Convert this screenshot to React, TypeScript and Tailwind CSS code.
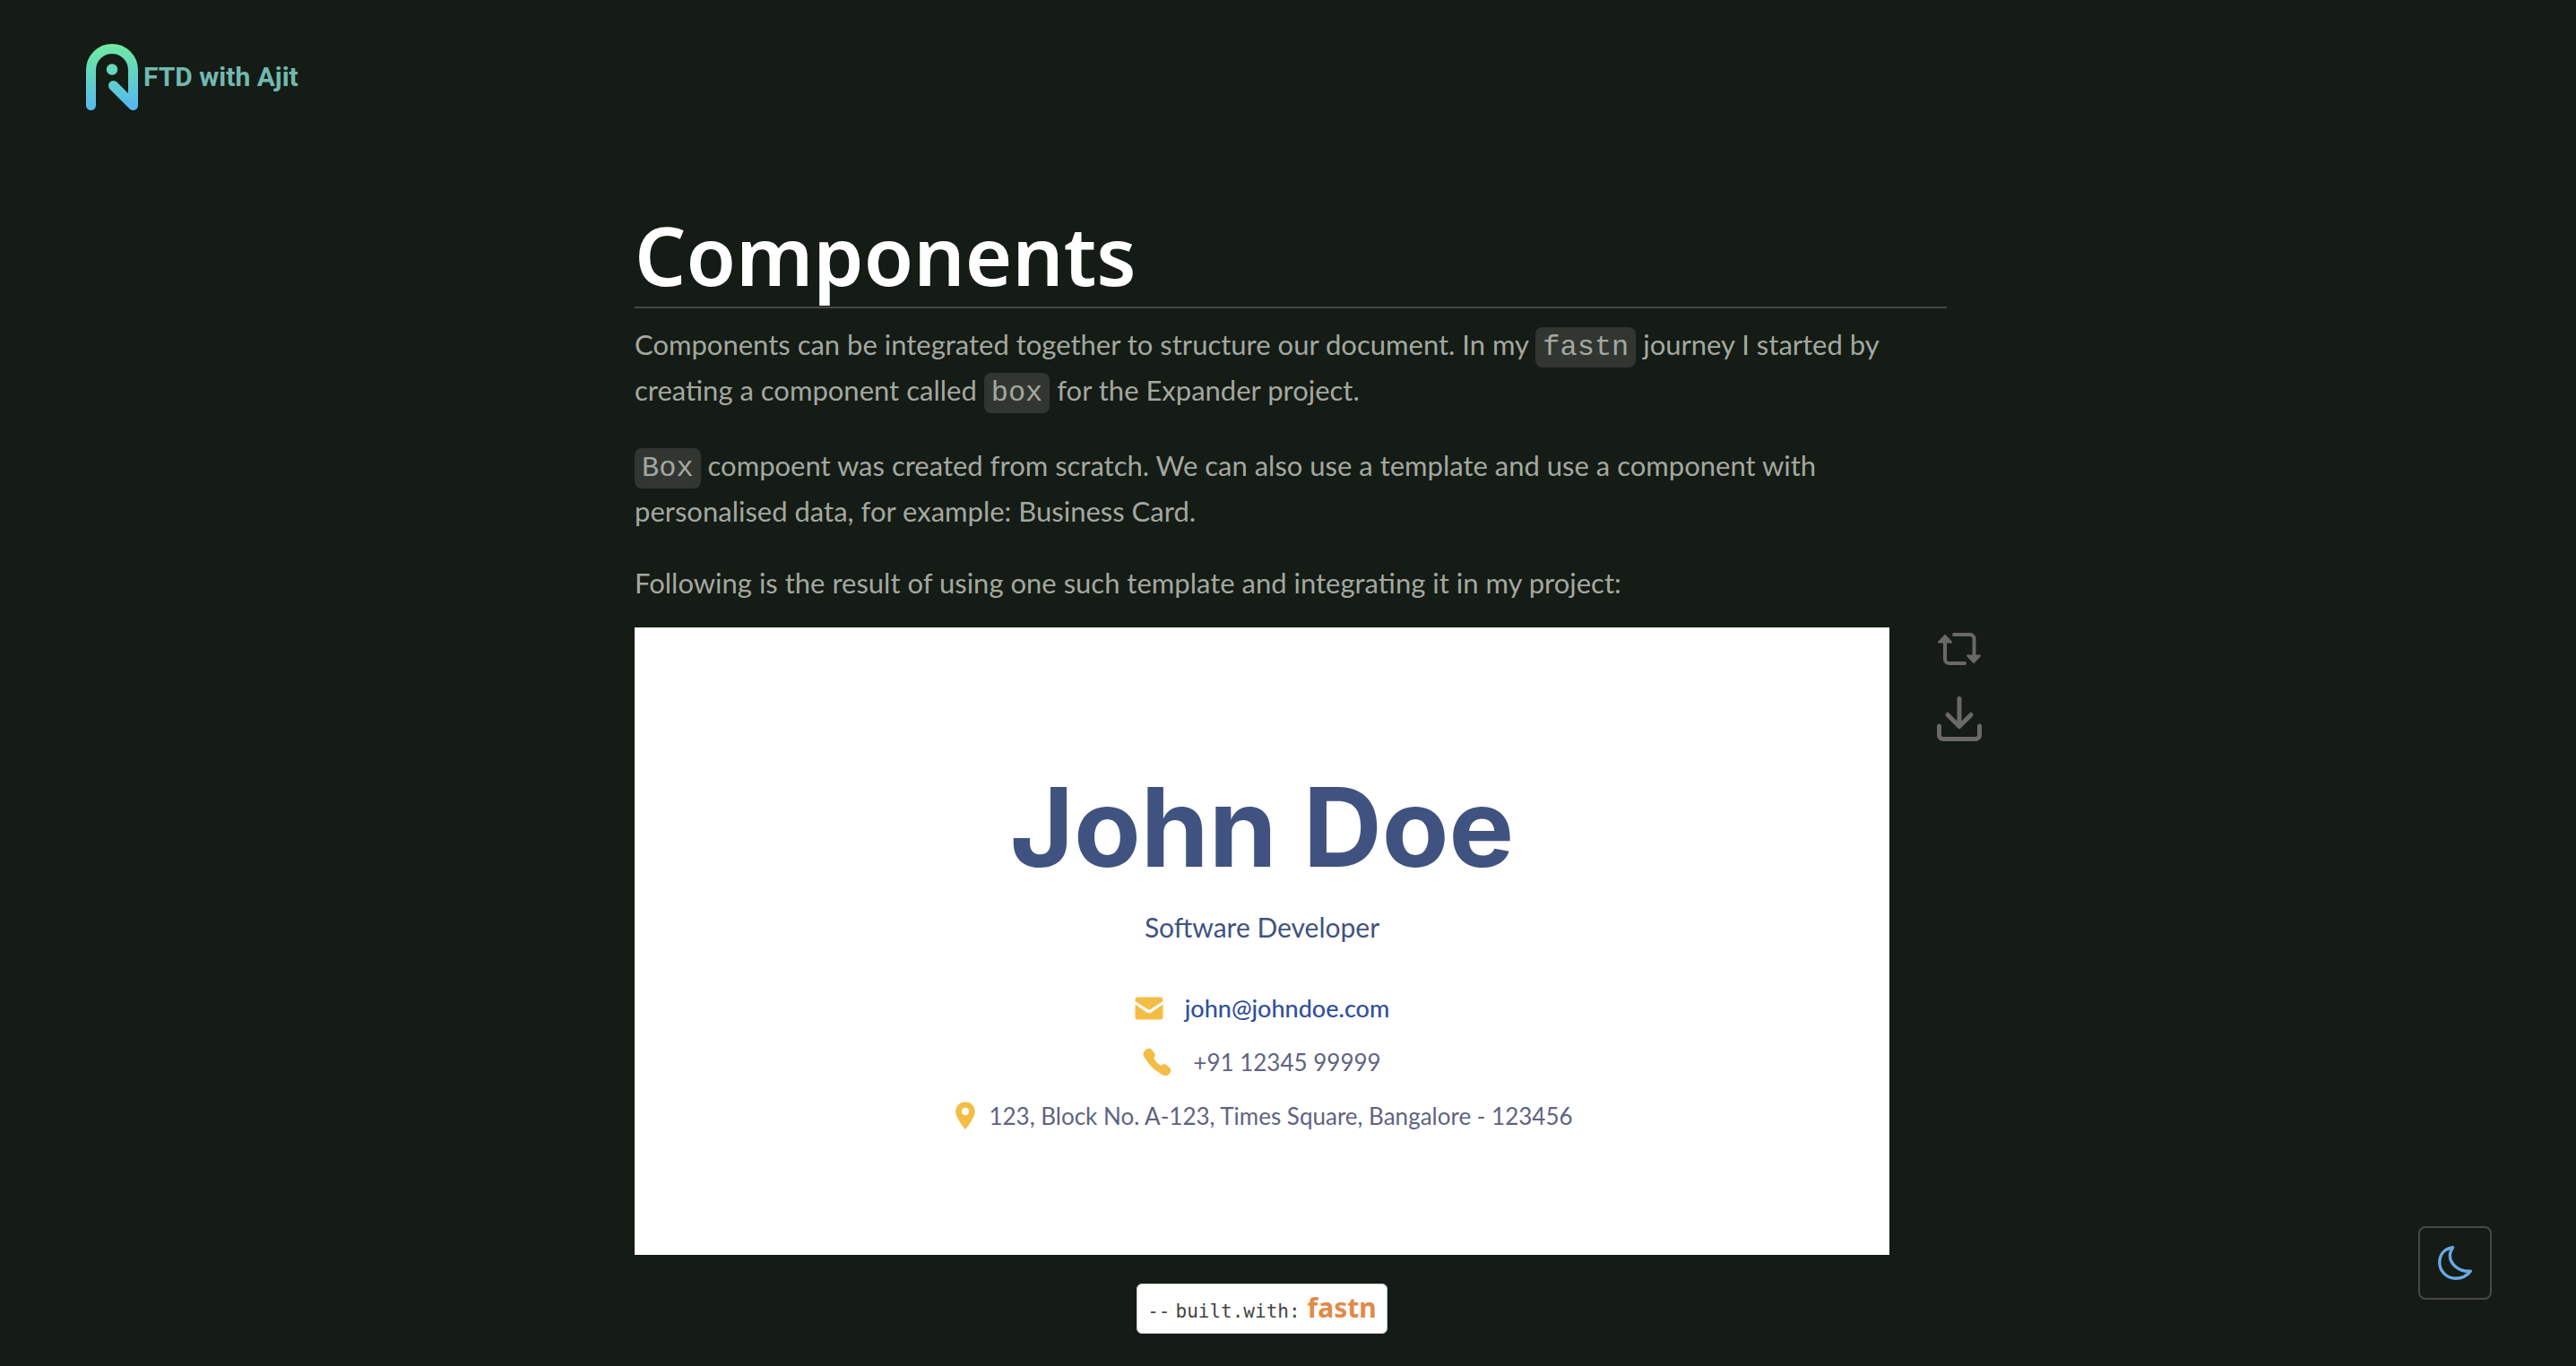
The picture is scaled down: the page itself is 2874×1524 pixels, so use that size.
import type { ReactNode } from "react";

function Code({ children }: { children: ReactNode }) {
  return (
    <code className="rounded-lg bg-[#313630] px-2 py-1 font-['Liberation_Mono',monospace] text-[32px] leading-none">
      {children}
    </code>
  );
}

function Logo() {
  return (
    <a href="#" className="flex items-center gap-[6px]">
      <svg viewBox="0 0 58 74" className="h-[74px] w-[58px]" aria-hidden="true">
        <defs>
          <linearGradient id="logo" gradientUnits="userSpaceOnUse" x1="24" y1="0" x2="32" y2="74">
            <stop offset="0" stopColor="#70eba0" />
            <stop offset="0.5" stopColor="#62d2c6" />
            <stop offset="1" stopColor="#55b8f3" />
          </linearGradient>
        </defs>
        <path
          d="M5.5 68.5V29a23.5 23.5 0 0 1 47 0V68.5L30.5 46.5"
          fill="none"
          stroke="url(#logo)"
          strokeWidth="11"
          strokeLinecap="round"
          strokeLinejoin="round"
        />
        <circle cx="29" cy="28.5" r="6.2" fill="url(#logo)" />
      </svg>
      <span className="font-['Roboto',sans-serif] text-[30px] leading-none font-bold text-[#71b9b0]">
        FTD with Ajit
      </span>
    </a>
  );
}

function MailIcon() {
  return (
    <svg viewBox="0 0 32 32" className="size-8" fill="#f5bc45" aria-hidden="true">
      <path d="M3.5 3.500h25a3 3 0 0 1 3 3v1.600L18 16.800a3.400 3.400 0 0 1-4 0L.5 8.100V6.500a3 3 0 0 1 3-3Z" />
      <path d="M.5 11.500 13 20.300a5 5 0 0 0 6 0L31.500 11.500V25.500a3 3 0 0 1-3 3h-25a3 3 0 0 1-3-3Z" />
    </svg>
  );
}

function PhoneIcon() {
  return (
    <svg viewBox="0 0 32 32" className="size-8" fill="#f5bc45" aria-hidden="true">
      <path d="M2.200 3.200C4.500.600 8 0 10 2.200L12.800 5.600c1.500 2 .9 3.700-.6 6 1.800 3.600 4.500 6.400 8 8.200 2-1.600 4-2.200 6-.7l3.600 2.800c2.300 2 1.700 5.100-.4 7.300-2.200 2.300-5 2.500-8 .8C13 25.200 6.500 18.500 1.700 10.500.1 7.700.2 5.400 2.200 3.200Z" />
    </svg>
  );
}

function PinIcon() {
  return (
    <svg viewBox="0 0 32 32" className="size-8" fill="#f5bc45" aria-hidden="true">
      <path
        fillRule="evenodd"
        d="M16 .5c6 0 10.800 4.600 10.800 10.600C26.800 17 19.500 27 16 31.300 12.500 27 5.200 17 5.200 11.100 5.200 5.100 10 .5 16 .5Zm0 6.300a4.200 4.200 0 1 0 0 8.400 4.200 4.200 0 0 0 0-8.400Z"
      />
    </svg>
  );
}

function RotateIcon() {
  return (
    <svg viewBox="0 0 52 40" className="h-10 w-[52px]" aria-hidden="true">
      <g fill="none" stroke="#696969" strokeWidth="4" strokeLinecap="round">
        <path d="M20 4H38a4.500 4.500 0 0 1 4.500 4.500V28" />
        <path d="M32 36H14.500A4.500 4.500 0 0 1 10 31.500V11" />
      </g>
      <g fill="#696969" stroke="#696969" strokeWidth="2" strokeLinejoin="round">
        <path d="M10 5 17 12.500H3Z" />
        <path d="M42 35 49 27.500H35Z" />
      </g>
    </svg>
  );
}

function DownloadIcon() {
  return (
    <svg
      viewBox="0 0 52 52"
      className="size-[52px]"
      fill="none"
      stroke="#696969"
      strokeWidth="5"
      strokeLinecap="round"
      strokeLinejoin="round"
      aria-hidden="true"
    >
      <path d="M26 3.500V34M13 21.500 26 34.500 39 21.500" />
      <path d="M3.500 34v10a4.500 4.500 0 0 0 4.500 4.500H44a4.500 4.500 0 0 0 4.500-4.500V34" />
    </svg>
  );
}

function MoonIcon() {
  return (
    <svg viewBox="0 0 38 38" className="size-[38px]" aria-hidden="true">
      <path
        d="M16.500 1.800C6 3.500 1.800 10.500 1.800 18.500c0 10 8 17.700 18 17.700 8.500 0 13.500-4 16.500-8-14 1-25-9.500-22.500-20.500.6-2.500 1.500-4 2.700-5.900Z"
        fill="none"
        stroke="#6ba8e5"
        strokeWidth="3.4"
        strokeLinejoin="round"
      />
    </svg>
  );
}

function BusinessCard() {
  return (
    <section className="flex aspect-[2/1] flex-1 flex-col items-center bg-white pt-[162px] text-[26px] leading-[60px] text-[#5f6482]">
      <h2 className="font-['Inter',sans-serif] text-[122px] leading-[122px] font-bold text-[#405380]">John Doe</h2>
      <p className="mt-[25px] mb-[35px] text-[30px] leading-[51px] text-[#405380]">Software Developer</p>
      <p className="flex items-center gap-6">
        <MailIcon />
        <a href="mailto:john@johndoe.com" className="text-[27px] font-medium text-[#324f9d]">
          john@johndoe.com
        </a>
      </p>
      <p className="flex items-center gap-6">
        <PhoneIcon />
        <span>+91 12345 99999</span>
      </p>
      <p className="flex items-center gap-[10px]">
        <PinIcon />
        <span>123, Block No. A-123, Times Square, Bangalore - 123456</span>
      </p>
    </section>
  );
}

export default function App() {
  return (
    <div className="min-h-screen bg-[#151b15] font-['Lato',sans-serif] text-[#a3a8a0]">
      <header className="flex px-24 pt-[49px]">
        <Logo />
      </header>
      <div className="pt-[116px] pb-9 pl-[6px]">
        <main className="mx-auto max-w-[1464px] text-[31px] leading-[51px]">
          <h1 className="border-b-2 border-[#484948] pb-[13px] font-['Noto_Sans',sans-serif] text-[90px] leading-[90px] font-semibold text-white">
            Components
          </h1>
          <p className="mt-[15px]">
            Components can be integrated together to structure our document. In my <Code>fastn</Code> journey I started by
            creating a component called <Code>box</Code> for the Expander project.
          </p>
          <p className="mt-[33px]">
            <Code>Box</Code> compoent was created from scratch. We can also use a template and use a component with
            personalised data, for example: Business Card.
          </p>
          <p className="mt-[29px]">
            Following is the result of using one such template and integrating it in my project:
          </p>
          <div className="-mr-10 mt-6 flex items-start gap-[52px]">
            <BusinessCard />
            <div className="flex flex-col gap-8 pt-1">
              <button type="button" aria-label="Flip card">
                <RotateIcon />
              </button>
              <button type="button" aria-label="Download card">
                <DownloadIcon />
              </button>
            </div>
          </div>
          <footer className="mt-8 mr-16 flex justify-center">
            <a
              href="https://fastn.com"
              className="flex h-14 items-baseline rounded-md border border-[#cccccc] bg-white px-[11px] text-[#444444]"
            >
              <span className="mr-[6px] font-['DejaVu_Sans_Mono',monospace] text-[21px]">--</span>
              <span className="mr-[8px] font-['DejaVu_Sans_Mono',monospace] text-[21px]">built.with:</span>
              <span className="font-['Noto_Sans',sans-serif] text-[30px] font-bold text-[#e08a48]">fastn</span>
            </a>
          </footer>
        </main>
      </div>
      <button
        type="button"
        aria-label="Toggle colour mode"
        className="fixed right-[94px] bottom-[74px] flex size-[82px] items-center justify-center rounded-lg border-2 border-[#484848]"
      >
        <MoonIcon />
      </button>
    </div>
  );
}
